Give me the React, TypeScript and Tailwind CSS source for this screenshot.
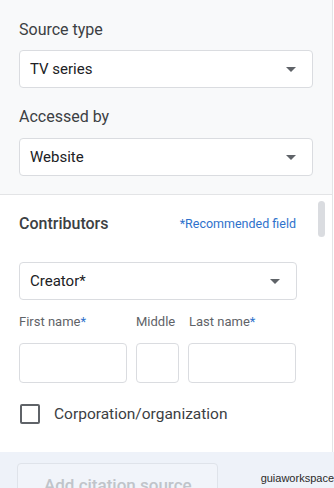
import { useState } from 'react'

function Caret() {
  return (
    <svg width="10" height="5" viewBox="0 0 10 5" className="shrink-0">
      <path d="M0 0 L10 0 L5 5 Z" fill="#5f6368" />
    </svg>
  )
}

function SelectBox({ value, className = "" }: { value: string; className?: string }) {
  return (
    <div className={`flex items-center justify-between h-[38px] bg-white border border-[#dadce0] rounded-[4px] pl-[10px] pr-[16px] ${className}`}>
      <span className="text-[15px] text-[#202124]">{value}</span>
      <Caret />
    </div>
  )
}

function App() {
  const [isOrg, setIsOrg] = useState(false);

  return (
    <div className="w-[334px] h-[488px] overflow-hidden bg-white flex flex-col" style={{ fontFamily: 'Roboto, "Liberation Sans", sans-serif' }}>
      <div className="shrink-0 w-[333px] bg-[#f8f9fa] border-r border-b border-[#e3e4e6] px-[19px] pt-[20px] pb-[18px]">
        <div className="text-[16px] leading-[20px] text-[#3c4043]">Source type</div>
        <SelectBox value="TV series" className="mt-[10px]" />
        <div className="text-[16px] leading-[20px] text-[#3c4043] mt-[19px]">Accessed by</div>
        <SelectBox value="Website" className="mt-[11px]" />
      </div>

      <div className="shrink-0 relative w-[333px] h-[257px] border-r border-[#e3e4e6] bg-white pl-[19px] pr-[36px] pt-[19px]">
        <div className="absolute right-[7px] top-[6px] w-[7px] h-[36px] rounded-full bg-[#dadce0]" />
        <div className="flex items-center justify-between h-[20px]">
          <span className="text-[16px] font-medium text-[#3c4043]">Contributors</span>
          <span className="text-[12.5px] text-[#2f72cc]">*Recommended field</span>
        </div>
        <SelectBox value="Creator*" className="mt-[28px] w-[278px]" />
        <div className="flex mt-[13px] h-[18px] items-center text-[13px] text-[#5f6368]">
          <span className="w-[117px]">First name<span className="text-[#2f72cc]">*</span></span>
          <span className="w-[53px]">Middle</span>
          <span>Last name<span className="text-[#2f72cc]">*</span></span>
        </div>
        <div className="flex gap-[9px] mt-[12px]">
          <div className="w-[108px] h-[40px] border border-[#dadce0] rounded-[4px]" />
          <div className="w-[44px] h-[40px] border border-[#dadce0] rounded-[4px]" />
          <div className="w-[108px] h-[40px] border border-[#dadce0] rounded-[4px]" />
        </div>
        <div className="flex items-center mt-[18px] gap-[14px] cursor-pointer" onClick={() => setIsOrg(!isOrg)}>
          <div className={`w-[20px] h-[20px] ml-[1px] border-2 rounded-[2px] ${isOrg ? "bg-[#1a73e8] border-[#1a73e8]" : "border-[#5f6368]"}`} />
          <span className="text-[15.5px] text-[#3c4043] pt-[2px]">Corporation/organization</span>
        </div>
      </div>

      <div className="relative flex-1 min-h-0 bg-[#eef2f9] pl-[17px] pt-[11px]">
        <div className="w-[201px] h-[40px] border border-[#dfe3ea] rounded-[4px] bg-[#f1f4fa] pl-[26px] pt-[9px]">
          <span className="text-[17px] font-medium text-[#c0c4ca]">Add citation source</span>
        </div>
        <span className="absolute right-0 bottom-[2px] text-[11px] text-[#2a2a2a]" style={{ fontFamily: '"Liberation Sans", sans-serif' }}>guiaworkspace</span>
      </div>
    </div>
  )
}

export default App
